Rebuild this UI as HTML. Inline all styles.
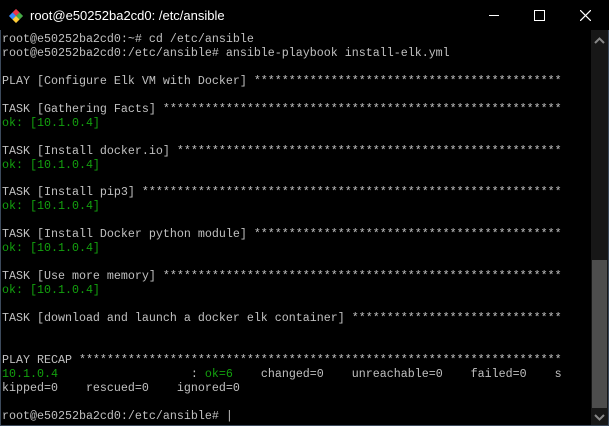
<!DOCTYPE html>
<html><head><style>
html,body{margin:0;padding:0;background:#000;width:609px;height:426px;overflow:hidden}
.win{position:absolute;left:0;top:0;width:607px;height:425px;border:1px solid #3c4a5c;border-top:none;background:#000}
.title{position:absolute;left:0;top:0;width:609px;height:30px;background:#000;color:#fff;font:13px "Liberation Sans",sans-serif}
.title .t{position:absolute;left:30px;top:8px}
pre{position:absolute;left:2px;top:33px;margin:0;font:11.67px/13.95px "Liberation Mono",monospace;color:#c0c0c0}
.g{color:#13a10e}
.sb{position:absolute;left:591px;top:30px;width:17px;height:395px;background:#171717}
.th{position:absolute;left:592px;top:260px;width:15px;height:148px;background:#4d4d4d}
</style></head><body>
<div class="win"></div>
<div class="title">
<svg style="position:absolute;left:8px;top:8px" width="16" height="16" viewBox="0 0 16 16"><path d="M8 1L15 8 8 15 1 8Z" fill="#666"/><path d="M8 1L11.5 4.5 8 8 4.5 4.5Z" fill="#e34"/><path d="M11.5 4.5L15 8 11.5 11.5 8 8Z" fill="#4a4"/><path d="M4.5 4.5L8 8 4.5 11.5 1 8Z" fill="#38f"/><path d="M8 8L11.5 11.5 8 15 4.5 11.5Z" fill="#fc3"/></svg>
<span class="t">root@e50252ba2cd0: /etc/ansible</span>
<div style="position:absolute;left:489px;top:15px;width:10px;height:1px;background:#fff"></div>
<div style="position:absolute;left:534px;top:10px;width:9px;height:9px;border:1px solid #fff"></div>
<svg style="position:absolute;left:580px;top:10px" width="11" height="11"><path d="M0 0L11 11M11 0L0 11" stroke="#fff" stroke-width="1.2"/></svg>
</div>
<pre>root@e50252ba2cd0:~# cd /etc/ansible
root@e50252ba2cd0:/etc/ansible# ansible-playbook install-elk.yml

PLAY [Configure Elk VM with Docker] ********************************************

TASK [Gathering Facts] *********************************************************
<span class="g">ok: [10.1.0.4]</span>

TASK [Install docker.io] *******************************************************
<span class="g">ok: [10.1.0.4]</span>

TASK [Install pip3] ************************************************************
<span class="g">ok: [10.1.0.4]</span>

TASK [Install Docker python module] ********************************************
<span class="g">ok: [10.1.0.4]</span>

TASK [Use more memory] *********************************************************
<span class="g">ok: [10.1.0.4]</span>

TASK [download and launch a docker elk container] ******************************


PLAY RECAP *********************************************************************
<span class="g">10.1.0.4</span>                   : <span class="g">ok=6</span>    changed=0    unreachable=0    failed=0    s
kipped=0    rescued=0    ignored=0

root@e50252ba2cd0:/etc/ansible# |</pre>
<div class="sb"></div><div class="th"></div>
<svg style="position:absolute;left:594px;top:37px" width="11" height="7"><path d="M1 6L5.5 1.5 10 6" stroke="#888" stroke-width="2" fill="none"/></svg>
<svg style="position:absolute;left:594px;top:414px" width="11" height="7"><path d="M1 1L5.5 5.5 10 1" stroke="#888" stroke-width="2" fill="none"/></svg>
</body></html>
